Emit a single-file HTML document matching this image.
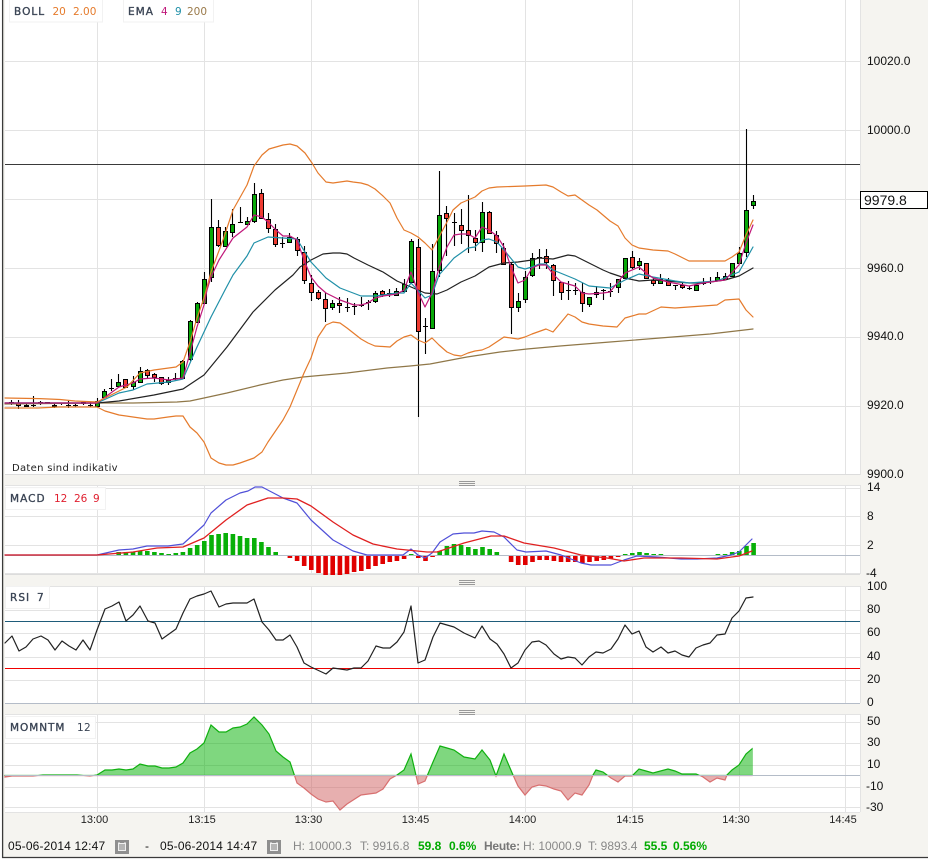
<!DOCTYPE html>
<html><head><meta charset="utf-8"><style>
html,body{margin:0;padding:0;background:#fff;width:928px;height:862px;overflow:hidden}
svg{display:block}
text{font-family:"Liberation Sans",Arial,sans-serif;font-size:12px;fill:#111}
.leg text,.leg{font-family:"DejaVu Sans","Liberation Sans",sans-serif;font-size:10.5px}
.lab{fill:#3a4454;stroke:#3a4454;stroke-width:.35;letter-spacing:1.05px}
.t{font-size:11px;text-anchor:middle;fill:#222}
.g{fill:#888}.b{font-weight:bold;fill:#0a0}
polyline{fill:none;stroke-linejoin:round;stroke-linecap:round}
</style></head><body>
<svg width="928" height="862" viewBox="0 0 928 862" xmlns="http://www.w3.org/2000/svg">
<defs>
<clipPath id="up"><rect x="0" y="700" width="752.6" height="75.5"/></clipPath>
<clipPath id="dn"><rect x="0" y="775.5" width="752.6" height="50"/></clipPath>
<path id="mm" d="M5 775.5L5 777 12 776 33 776 43 775 55 775 77 775 90 776 97 775 105 770 112 770 119 769 126 770 133 769 140 764 148 766 155 766 162 768 169 768 176 767 183 763 190 753 197 749 204 743 211 725 219 732 226 732 233 728 240 727 247 724 254 717 262 725 269 734 276 751 283 757 290 762 297 783 304 788 311 794 318 799 326 802 333 801 340 810 347 804 361 795 376 793 383 789 390 779 397 775 404 770 411 754 418 784 425 781 433 762 440 746 447 748 454 750 464 757 475 759 482 750 490 760 496 776 504 754 513 775 518 786 525 795 532 787 539 785 546 786 554 789 561 791 568 800 575 793 582 795 589 785 593 775 596 770 603 772 607 775 611 778 618 782 625 776 632 776 639 769 646 771 653 773 668 769 675 771 682 774 696 774 701 776 703 777 710 782 717 778 725 780 727 775 732 770 739 765 746 754 753 748 753 775.5Z"/>
</defs>

<rect x="2" y="0" width="926" height="858" fill="#f5f4f0"/>
<rect x="5" y="0" width="855" height="475" fill="#fff"/>
<rect x="5" y="485" width="855" height="89" fill="#fff"/>
<rect x="5" y="586" width="855" height="117" fill="#fff"/>
<rect x="5" y="714" width="855" height="98" fill="#fff"/>

<!-- vertical grid -->
<path stroke="#e3e3e3" fill="none" d="M97.5 0V475M204.5 0V475M311.5 0V475M418.5 0V475M525.5 0V475M632.5 0V475M739.5 0V475M845.5 0V475M860.5 0V475
M97.5 485V574M204.5 485V574M311.5 485V574M418.5 485V574M525.5 485V574M632.5 485V574M739.5 485V574M845.5 485V574M860.5 485V574
M97.5 586V703M204.5 586V703M311.5 586V703M418.5 586V703M525.5 586V703M632.5 586V703M739.5 586V703M845.5 586V703M860.5 586V703
M97.5 714V812M204.5 714V812M311.5 714V812M418.5 714V812M525.5 714V812M632.5 714V812M739.5 714V812M845.5 714V812M860.5 714V812"/>
<!-- horizontal grid -->
<path stroke="#e3e3e3" fill="none" d="M5 61.5H860M5 130.5H860M5 199.5H860M5 268.5H860M5 337.5H860M5 406.5H860M5 474.5H860
M5 485.5H860M5 488.5H860M5 516.5H860M5 545.5H860M5 573.5H860
M5 586.5H860M5 610.5H860M5 633.5H860M5 657.5H860M5 680.5H860
M5 714.5H860M5 722.5H860M5 743.5H860M5 765.5H860M5 787.5H860M5 807.5H860M5 812.5H860"/>
<path stroke="#dcdcdc" d="M5 474.5H860M5 574.5H860"/>
<path stroke="#b4bcc8" d="M5 703.5H860"/>

<!-- grips -->
<path stroke="#999" d="M459 481.5H475M459 483.5H475M459 485.5H475M459 580.5H475M459 582.5H475M459 584.5H475M459 710.5H475M459 712.5H475M459 714.5H475"/>

<!-- price line -->
<path stroke="#3a3a3a" d="M5 164.5H860"/>

<!-- candles -->
<path stroke="#000" stroke-width="1.1" fill="none" d="M11.5 400V405M18.5 400V409M26.5 404V407M33.5 396V407M31 405.5h5M40.5 401V405M38 402.5h5M47.5 402V404M45 402.5h5M54.5 403V408M61.5 403V405M59 403.5h5M68.5 401V408M66 405.5h5M75.5 404V407M73 405.5h5M83.5 401V405M90.5 402V407M88 405.5h5M97.5 398V407M104.5 389V398M111.5 379V391M109 388.5h5M118.5 374V387M125.5 379V388M133.5 376V390M140.5 367V383M147.5 369V378M154.5 373V382M161.5 377V385M168.5 377V385M175.5 373V380M173 378.5h5M182.5 360V379M190.5 320V361M197.5 302V323M204.5 272V304M211.5 199V282M218.5 220V247M225.5 227V247M232.5 209V237M240.5 207V223M238 222.5h5M247.5 217V224M254.5 183V223M261.5 189V219M268.5 213V233M275.5 224V247M282.5 237V248M280 243.5h5M289.5 233V243M297.5 237V256M304.5 246V284M311.5 275V301M318.5 290V300M325.5 293V322M332.5 300V310M339.5 297V313M347.5 298V312M345 307.5h5M354.5 303V315M352 306.5h5M361.5 297V307M359 305.5h5M368.5 300V310M366 302.5h5M375.5 291V303M382.5 290V297M389.5 289V297M387 293.5h5M396.5 288V296M404.5 279V292M411.5 239V283M418.5 239V417M425.5 318V354M423 326.5h5M432.5 244V328M439.5 171V277M446.5 206V256M454.5 213V246M452 222.5h5M461.5 209V244M468.5 195V253M475.5 230V251M482.5 202V252M489.5 211V234M496.5 231V253M503.5 243V265M511.5 263V334M518.5 293V312M525.5 271V303M532.5 253V277M539.5 249V269M537 257.5h5M546.5 249V269M553.5 264V296M561.5 282V300M568.5 281V300M566 290.5h5M575.5 283V295M573 290.5h5M582.5 283V312M589.5 297V307M596.5 286V298M603.5 289V300M601 290.5h5M610.5 283V297M608 291.5h5M618.5 279V293M625.5 258V279M632.5 251V269M639.5 258V270M646.5 263V279M653.5 277V286M660.5 274V284M668.5 278V286M675.5 285V290M673 285.5h5M682.5 283V289M689.5 286V290M687 288.5h5M703.5 278V285M701 283.5h5M710.5 277V284M708 281.5h5M717.5 272V281M725.5 273V280M732.5 263V276M739.5 247V263M746.5 129V257M753.5 195V209"/>
<path stroke="#000" fill="#08a808" d="M9.5 402.5h4v1h-4zM95.5 401.5h4v5h-4zM102.5 391.5h4v6h-4zM116.5 382.5h4v4h-4zM131.5 382.5h4v4h-4zM138.5 371.5h4v11h-4zM166.5 380.5h4v2h-4zM180.5 361.5h4v17h-4zM188.5 321.5h4v38h-4zM195.5 303.5h4v19h-4zM202.5 279.5h4v24h-4zM209.5 227.5h4v50h-4zM223.5 231.5h4v15h-4zM230.5 224.5h4v8h-4zM245.5 221.5h4v3h-4zM252.5 194.5h4v27h-4zM287.5 237.5h4v5h-4zM330.5 303.5h4v4h-4zM373.5 293.5h4v8h-4zM394.5 291.5h4v4h-4zM402.5 284.5h4v7h-4zM409.5 241.5h4v41h-4zM430.5 271.5h4v57h-4zM437.5 215.5h4v55h-4zM480.5 212.5h4v30h-4zM516.5 301.5h4v6h-4zM523.5 277.5h4v22h-4zM530.5 258.5h4v17h-4zM587.5 297.5h4v7h-4zM616.5 279.5h4v8h-4zM623.5 258.5h4v20h-4zM637.5 261.5h4v4h-4zM658.5 279.5h4v4h-4zM694.5 285.5h4v5h-4zM715.5 277.5h4v3h-4zM723.5 276.5h4v3h-4zM730.5 263.5h4v13h-4zM737.5 253.5h4v10h-4zM744.5 210.5h4v42h-4zM751.5 201.5h4v4h-4z"/>
<path stroke="#000" fill="#ee3c32" d="M16.5 403.5h4v2h-4zM24.5 405.5h4v1h-4zM52.5 405.5h4v1h-4zM81.5 402.5h4v1h-4zM123.5 379.5h4v8h-4zM145.5 370.5h4v5h-4zM152.5 374.5h4v3h-4zM159.5 377.5h4v6h-4zM216.5 227.5h4v18h-4zM259.5 193.5h4v25h-4zM266.5 219.5h4v9h-4zM273.5 229.5h4v15h-4zM295.5 239.5h4v11h-4zM302.5 252.5h4v28h-4zM309.5 283.5h4v9h-4zM316.5 292.5h4v6h-4zM323.5 299.5h4v9h-4zM337.5 303.5h4v2h-4zM380.5 291.5h4v3h-4zM416.5 247.5h4v84h-4zM444.5 213.5h4v5h-4zM459.5 225.5h4v5h-4zM466.5 230.5h4v5h-4zM473.5 238.5h4v4h-4zM487.5 212.5h4v21h-4zM494.5 235.5h4v8h-4zM501.5 248.5h4v16h-4zM509.5 264.5h4v43h-4zM544.5 256.5h4v6h-4zM551.5 265.5h4v15h-4zM559.5 282.5h4v10h-4zM580.5 292.5h4v11h-4zM594.5 292.5h4v2h-4zM630.5 257.5h4v10h-4zM644.5 263.5h4v15h-4zM651.5 280.5h4v3h-4zM666.5 280.5h4v5h-4zM680.5 285.5h4v2h-4z"/>

<!-- EMA 200 -->
<polyline stroke="#8f7748" stroke-width="1.2" points="5,404 97,403 133,403 177,402 190,401 204,398 227,393 260,385 283,380 303,377 347,373 387,368 410,366 430,364 467,357 500,352 527,349 560,346 610,342 660,338 710,334 753,329"/>
<!-- EMA black -->
<polyline stroke="#222" stroke-width="1.2" points="5,403 97,403 119,401 154,395 183,389 204,375 227,347 253,312 275,290 293,275 300,267 311,260 323,254 333,253 340,253 347,254 354,258 368,265 383,272 397,281 411,287 425,293 437,294 447,290 461,282 475,276 489,267 504,263 518,262 532,260 539,258 553,259 568,255 575,256 589,263 603,270 610,273 625,278 639,281 653,280 668,281 689,283 703,283 725,280 739,276 753,268"/>
<!-- EMA 9 teal -->
<polyline stroke="#2090a8" stroke-width="1.2" points="5,403 97,403 119,393 133,390 147,384 169,382 183,379 197,347 211,317 225,290 233,275 247,256 254,243 268,237 283,238 297,239 300,244 311,262 326,278 340,288 361,296 375,296 397,293 404,293 411,283 425,298 432,295 439,275 454,258 468,248 475,247 482,240 489,239 497,242 504,250 518,267 525,269 532,267 539,264 546,264 553,270 575,279 589,286 610,288 625,280 639,274 653,277 675,281 689,283 717,281 739,272 753,247"/>
<!-- EMA 4 magenta -->
<polyline stroke="#c0187a" stroke-width="1.2" points="5,403 97,403 119,387 133,383 140,379 154,378 169,380 183,378 190,353 197,327 204,305 207,290 211,277 219,260 233,238 247,227 254,215 262,217 268,222 276,230 283,236 290,236 297,240 304,260 311,277 318,286 326,293 340,300 354,305 361,305 368,303 375,298 383,296 397,294 404,290 411,272 418,292 425,307 432,293 439,268 447,247 454,235 461,234 468,234 475,238 482,227 489,230 497,236 504,247 511,267 518,283 525,280 532,268 539,265 546,265 553,274 561,282 575,286 582,293 589,294 603,293 610,292 618,282 625,273 639,267 646,273 653,278 668,282 689,286 703,283 725,280 739,265 746,243 753,225"/>
<!-- BOLL -->
<polyline stroke="#e57b2c" stroke-width="1.2" points="5,398 40,398.6 60,399.5 75,401 97,402 127,387 140,373 154,370 176,367 183,362 190,342 197,318 204,298 211,272 223,240 233,210 247,185 254,166 262,155 269,149 283,145 290,144 297,146 305,153 312,163 318,173 326,182 333,183 340,182 347,181 353,182 361,183 368,185 375,189 383,196 390,203 397,218 404,230 411,233 418,237 425,243 432,250 439,237 447,222 453,210 461,203 468,200 475,197 482,191 489,188 497,187 525,186 546,185 553,187 561,192 568,196 575,195 582,200 589,205 597,210 610,221 618,226 625,238 632,245 639,248 653,250 668,251 675,254 689,261 703,261 725,261 732,257 739,252 746,235 753,220"/>
<polyline stroke="#e57b2c" stroke-width="1.2" points="5,408 38,408 58,407 97,407 105,411 119,415 133,417 147,419 154,419 168,417 176,416 183,416 190,427 197,433 204,442 211,458 219,463 226,465 233,465 240,463 254,458 262,452 268,442 283,420 290,407 297,390 304,373 311,358 318,337 326,325 333,322 340,323 347,328 361,339 368,343 375,346 390,347 397,341 404,337 411,335 418,340 425,343 432,338 439,345 447,352 454,355 461,356 468,353 475,351 482,350 489,347 504,337 511,338 518,339 525,337 532,334 546,329 553,332 568,314 575,317 582,322 589,324 603,326 617,327 625,318 639,314 646,314 661,307 675,308 689,307 717,305 725,300 739,299 746,310 753,317"/>

<!-- MACD hist -->
<path stroke="#08b008" stroke-width="4.6" fill="none" d="M118.7 552V555M125.9 552V555M133 552V555M140.1 551V555M147.3 551V555M154.4 552V555M161.5 553V555M168.7 554V555M175.8 553V555M182.9 552V555M190.1 548V555M197.2 545V555M204.3 541V555M211.5 535V555M218.6 534V555M225.7 533V555M232.9 534V555M240 536V555M247.1 538V555M254.3 538V555M261.4 542V555M268.5 547V555M275.7 552V555M411.2 554V555M439.7 551V555M446.9 546V555M454 544V555M461.1 545V555M468.3 547V555M475.4 549V555M482.5 547V555M489.7 549V555M496.8 552V555M625.2 554V555M632.3 553V555M639.5 552V555M646.6 553V555M653.7 554V555M660.9 554V555M717.9 554V555M725.1 554V555M732.2 552V555M739.3 551V555M746.5 546V555M753.6 543V555"/>
<path stroke="#e00000" stroke-width="4.6" fill="none" d="M289.9 555V558M297.1 555V561M304.2 555V566M311.3 555V570M318.5 555V573M325.6 555V575M332.7 555V575M339.9 555V575M347 555V574M354.1 555V572M361.3 555V571M368.4 555V569M375.5 555V566M382.7 555V564M389.8 555V562M396.9 555V561M404.1 555V559M418.3 555V558M425.5 555V561M432.6 555V557M511.1 555V562M518.2 555V565M525.3 555V565M532.5 555V562M539.6 555V560M546.7 555V560M553.9 555V561M561 555V562M568.1 555V562M575.3 555V562M582.4 555V563M589.5 555V562M596.7 555V561M603.8 555V560M610.9 555V559M618.1 555V557"/>
<path stroke="#b4bcc8" d="M5 555.5H860"/>
<polyline stroke="#5050d8" stroke-width="1.2" points="5,555 97,555 119,550 133,549 147,546 168,546 183,544 204,525 211,513 226,500 240,493 248,491 255,487 262,487 283,498 297,503 311,520 333,540 353,551 367,555 403,555 411,549 418,555 425,558 432,553 440,542 453,534 464,533 474,533 482,531 494,532 504,537 517,550 526,552 546,551 561,555 581,563 591,565 611,565 624,560 637,556 657,557 681,559 697,559 717,558 731,555 739,552 752,539"/>
<polyline stroke="#e02020" stroke-width="1.3" points="5,555 97,555 133,552 157,548 183,547 204,538 226,520 247,505 268,498 283,498 297,499 311,506 333,522 353,535 373,544 397,549 427,552 437,552 464,543 491,536 504,536 524,543 554,548 581,555 607,558 624,561 644,558 681,558 717,559 739,556 752,551"/>

<!-- RSI -->
<path stroke="#1f5c7a" d="M5 621.5H860"/>
<path stroke="#f00000" d="M5 668.5H860"/>
<polyline stroke="#222" stroke-width="1.2" points="5,643 12,636 19,651 26,647 33,639 41,636 48,640 55,650 62,641 69,646 76,650 83,640 90,650 97,630 105,609 112,606 119,602 126,621 133,615 140,606 148,621 155,623 162,639 169,634 176,629 183,613 190,599 197,596 204,594 211,591 219,607 226,604 233,603 247,603 254,599 262,622 269,630 276,640 283,640 290,635 297,647 304,663 311,667 326,674 333,668 340,669 347,670 354,668 361,668 368,661 376,646 383,648 390,648 397,642 404,632 411,606 418,663 425,660 433,637 440,623 454,627 464,633 475,638 482,626 490,639 497,644 504,654 511,668 518,663 525,650 532,642 539,641 546,645 554,654 561,659 568,657 575,658 582,665 589,657 596,652 603,653 611,649 618,639 625,625 632,634 639,631 646,647 653,652 661,647 668,653 675,651 682,655 689,657 696,648 703,645 710,643 717,635 725,634 732,618 739,611 746,598 753,597"/>

<!-- Momentum -->
<use href="#mm" clip-path="url(#up)" fill="#00b000" fill-opacity=".5"/>
<use href="#mm" clip-path="url(#dn)" fill="#d06060" fill-opacity=".5"/>
<use href="#mm" clip-path="url(#up)" fill="none" stroke="#10b010" stroke-width="1.2"/>
<use href="#mm" clip-path="url(#dn)" fill="none" stroke="#d87070" stroke-width="1.2"/>
<path stroke="#b4bcc8" d="M5 775.5H860"/>

<!-- legends -->
<g class="leg">
<rect x="9.5" y="-1" width="93" height="23" fill="#fff" fill-opacity=".9" stroke="#f2f2f2"/>
<text x="14" y="15" class="lab leg">BOLL</text>
<text x="52.5" y="15" class="leg" style="fill:#e57b2c">20</text>
<text x="73" y="15" class="leg" style="fill:#e57b2c">2.00</text>
<rect x="123.5" y="-1" width="90" height="23" fill="#fff" fill-opacity=".9" stroke="#f2f2f2"/>
<text x="128" y="15" class="lab leg">EMA</text>
<text x="161" y="15" class="leg" style="fill:#c0187a">4</text>
<text x="175" y="15" class="leg" style="fill:#2090a8">9</text>
<text x="187" y="15" class="leg" style="fill:#9a7a4a">200</text>

<rect x="9" y="460" width="120" height="14" fill="#fff"/>
<text x="12" y="471" class="leg" style="fill:#222;font-size:10px;letter-spacing:.3px">Daten sind indikativ</text>

<rect x="5.5" y="487.5" width="100" height="22" fill="#fff" fill-opacity=".9" stroke="#f2f2f2"/>
<text x="10" y="502" class="lab leg">MACD</text>
<text x="54" y="502" class="leg" style="fill:#e02030">12</text>
<text x="74" y="502" class="leg" style="fill:#e02030">26</text>
<text x="93" y="502" class="leg" style="fill:#e02030">9</text>

<rect x="5.5" y="586.5" width="44" height="22" fill="#fff" fill-opacity=".9" stroke="#f2f2f2"/>
<text x="10" y="601" class="lab leg">RSI</text>
<text x="37" y="601" class="lab leg">7</text>

<rect x="5.5" y="716.5" width="90" height="22" fill="#fff" fill-opacity=".9" stroke="#f2f2f2"/>
<text x="10" y="731" class="lab leg" style="letter-spacing:.95px">MOMNTM</text>
<text x="77" y="731" class="leg" style="fill:#3a4454;letter-spacing:.3px">12</text>
</g>

<!-- axis labels -->
<text x="867" y="65">10020.0</text>
<text x="867" y="134">10000.0</text>
<text x="867" y="272">9960.0</text>
<text x="867" y="340">9940.0</text>
<text x="867" y="409">9920.0</text>
<text x="867" y="478">9900.0</text>
<rect x="860.5" y="191.5" width="67" height="17" fill="#fff" stroke="#000"/>
<text x="864" y="205" style="font-size:14px">9979.8</text>

<text x="867" y="491">14</text>
<text x="867" y="520">8</text>
<text x="867" y="549">2</text>
<text x="866" y="577">-4</text>

<text x="867" y="590">100</text>
<text x="867" y="613">80</text>
<text x="867" y="636">60</text>
<text x="867" y="660">40</text>
<text x="867" y="683">20</text>
<text x="867" y="706">0</text>

<text x="867" y="725">50</text>
<text x="867" y="746">30</text>
<text x="867" y="768">10</text>
<text x="866" y="790">-10</text>
<text x="866" y="811">-30</text>

<text class="t" x="94.5" y="823">13:00</text>
<text class="t" x="202" y="823">13:15</text>
<text class="t" x="308.5" y="823">13:30</text>
<text class="t" x="415.5" y="823">13:45</text>
<text class="t" x="522.5" y="823">14:00</text>
<text class="t" x="630" y="823">14:15</text>
<text class="t" x="736" y="823">14:30</text>
<text class="t" x="843" y="823">14:45</text>

<!-- bottom bar -->
<text x="8" y="850" style="letter-spacing:.16px">05-06-2014 12:47</text>
<g>
<rect x="115" y="840" width="14" height="14" fill="#8f8f8f"/>
<path d="M118.5 843.5h7v7h-7z" fill="#b5b5b5" stroke="#f0f0f0"/>
<path d="M119 842v2M125 842v2" stroke="#f0f0f0"/>
<rect x="267" y="840" width="14" height="14" fill="#8f8f8f"/>
<path d="M270.5 843.5h7v7h-7z" fill="#b5b5b5" stroke="#f0f0f0"/>
<path d="M271 842v2M277 842v2" stroke="#f0f0f0"/>
</g>
<text x="145" y="850">-</text>
<text x="160" y="850" style="letter-spacing:.16px">05-06-2014 14:47</text>
<text class="g" x="293" y="850">H: 10000.3</text>
<text class="g" x="360" y="850">T: 9916.8</text>
<text class="b" x="418" y="850">59.8</text>
<text class="b" x="449" y="850">0.6%</text>
<text class="g" x="484" y="850" style="font-weight:bold;fill:#777;letter-spacing:-.25px">Heute:</text>
<text class="g" x="523" y="850">H: 10000.9</text>
<text class="g" x="588" y="850">T: 9893.4</text>
<text class="b" x="644" y="850">55.5</text>
<text class="b" x="673" y="850">0.56%</text>

<!-- frame -->
<path stroke="#3a3a3a" stroke-width="1.3" fill="none" d="M2.6 0V857.5H928"/>
</svg>
</body></html>
